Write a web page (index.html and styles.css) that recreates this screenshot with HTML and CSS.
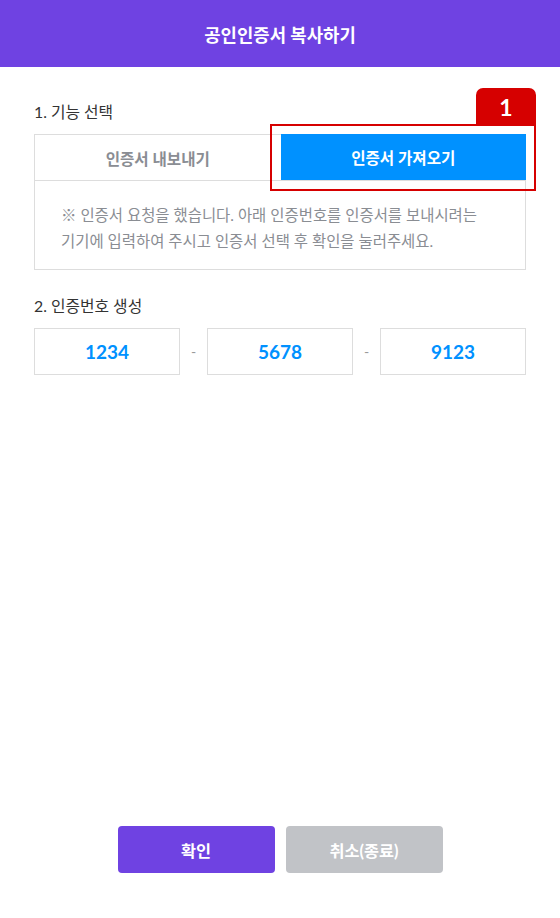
FILE: index.html
```html
<!DOCTYPE html>
<html lang="ko">
<head>
<meta charset="utf-8">
<title>공인인증서 복사하기</title>
<link rel="stylesheet" href="styles.css">
</head>
<body>
<div class="page">
  <header class="header">공인인증서 복사하기</header>
  <main class="content">
    <div class="label">1. 기능 선택</div>
    <div class="tabs">
      <div class="tab-row">
        <div class="tab">인증서 내보내기</div>
        <div class="tab active">인증서 가져오기</div>
      </div>
      <div class="tab-body">※ 인증서 요청을 했습니다. 아래 인증번호를 인증서를 보내시려는<br>기기에 입력하여 주시고 인증서 선택 후 확인을 눌러주세요.</div>
      <div class="highlight"></div>
      <div class="badge">1</div>
    </div>
    <div class="label label-2">2. 인증번호 생성</div>
    <div class="codes">
      <div class="code">1234</div>
      <div class="dash">-</div>
      <div class="code">5678</div>
      <div class="dash">-</div>
      <div class="code">9123</div>
    </div>
  </main>
  <footer class="footer">
    <button class="btn btn-primary">확인</button>
    <button class="btn btn-gray">취소(종료)</button>
  </footer>
</div>
</body>
</html>
```
FILE: styles.css
```css
* { box-sizing: border-box; }
html, body { margin: 0; padding: 0; }
body {
  font-family: "Lato", "Noto Sans CJK KR", sans-serif;
  color: #333;
  background: #fff;
}
.page {
  min-height: 100vh;
  display: flex;
  flex-direction: column;
}
.header {
  height: 67px;
  background: #6f42e2;
  color: #fff;
  font-size: 17.8px;
  font-weight: 700;
  display: flex;
  align-items: center;
  justify-content: center;
}
.content {
  padding: 34px 34px 0;
  flex: 1;
}
.label {
  font-size: 15.8px;
  line-height: 22px;
  color: #333;
  margin-bottom: 11px;
}
.label-2 { margin-top: 25px; }
.tabs {
  position: relative;
  border: 1px solid #ddd;
}
.tab-row {
  display: flex;
  border-bottom: 1px solid #ddd;
}
.tab {
  flex: 1;
  height: 45px;
  display: flex;
  align-items: center;
  justify-content: center;
  font-size: 15.6px;
  font-weight: 700;
  color: #8a8d93;
}
.tab.active {
  background: #0091ff;
  color: #fff;
  margin-top: -1px;
  margin-right: -1px;
  height: 46px;
}
.tab-body {
  padding: 21px 10px 15px 26px;
  font-size: 15.45px;
  line-height: 26px;
  color: #8a8d93;
  white-space: nowrap;
}
.highlight {
  position: absolute;
  left: 235px;
  top: -11px;
  width: 266px;
  height: 67px;
  border: 2px solid #d60000;
}
.badge {
  position: absolute;
  left: 441px;
  top: -47px;
  width: 60px;
  height: 37px;
  background: #d60000;
  border-radius: 7px 7px 0 0;
  color: #fff;
  font-size: 23px;
  font-weight: 700;
  display: flex;
  align-items: center;
  justify-content: center;
}
.codes {
  display: flex;
  align-items: center;
}
.code {
  flex: 0 0 146px;
  height: 47px;
  border: 1px solid #ddd;
  display: flex;
  align-items: center;
  justify-content: center;
  color: #0091ff;
  font-size: 19px;
  font-weight: 700;
}
.dash {
  flex: 1;
  text-align: center;
  color: #999;
  font-size: 14px;
}
.footer {
  display: flex;
  justify-content: center;
  gap: 11px;
  padding-bottom: 45px;
}
.btn {
  width: 157px;
  height: 47px;
  border: 0;
  border-radius: 4px;
  font-family: "Lato", "Noto Sans CJK KR", sans-serif;
  font-size: 16.3px;
  font-weight: 700;
  color: #fff;
}
.btn-primary { background: #6f42e2; }
.btn-gray { background: #c1c3c7; }
```
